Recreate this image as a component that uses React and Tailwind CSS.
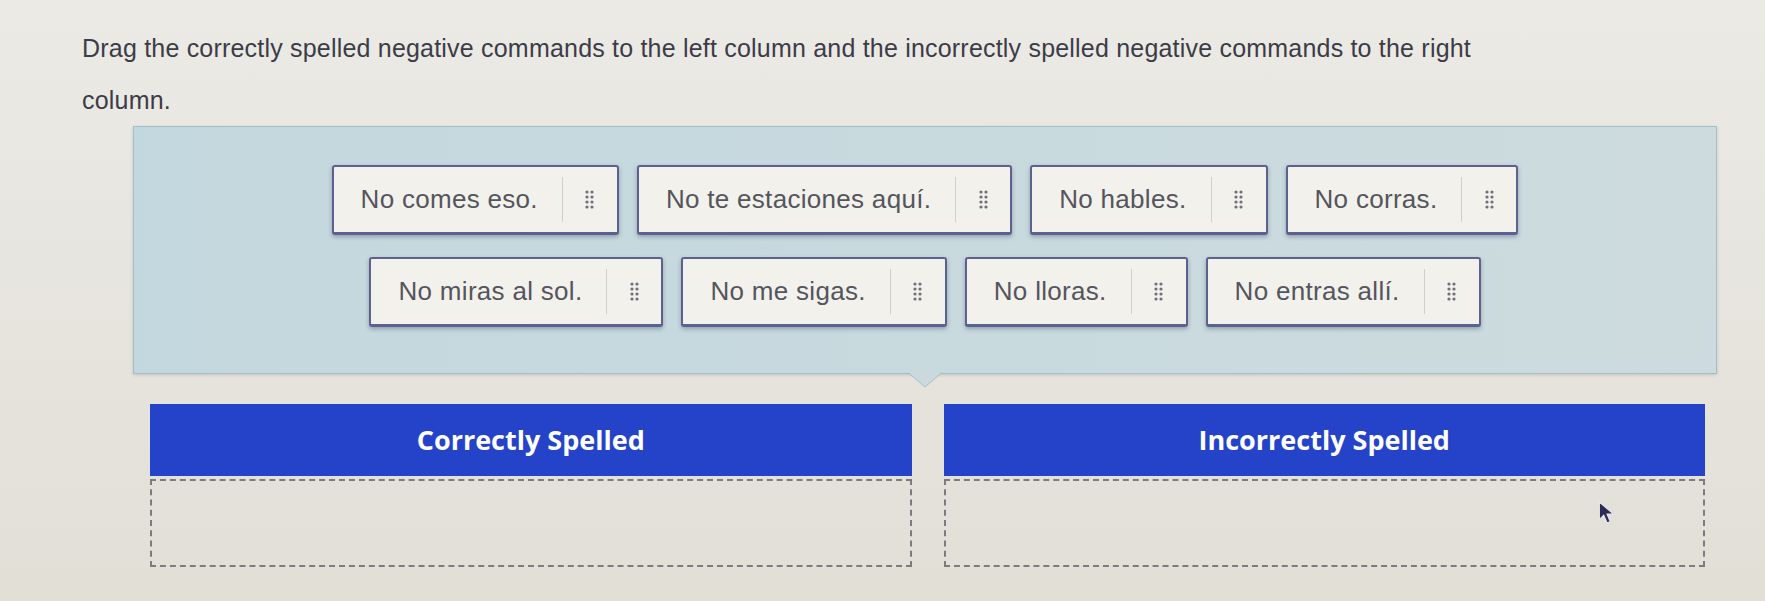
import React from 'react'

const rowOne = ['No comes eso.', 'No te estaciones aquí.', 'No hables.', 'No corras.']
const rowTwo = ['No miras al sol.', 'No me sigas.', 'No lloras.', 'No entras allí.']

// eight-dot grip shown at the right end of every draggable tile
const Grip = () => (
  <svg width="9" height="19" viewBox="0 0 9 19" className="text-[#707078]">
    {[2, 7].map((cx) =>
      [2, 7, 12, 17].map((cy) => <circle key={`${cx}-${cy}`} cx={cx} cy={cy} r="1.6" fill="currentColor" />)
    )}
  </svg>
)

const Tile = ({ label }) => (
  <div className="flex h-[70px] items-stretch rounded-[3px] border-2 border-b-[3px] border-[#5d6190] bg-[#f2f1ec] shadow-[0_2px_4px_rgba(40,50,90,0.35)]">
    <span className="flex items-center pl-[27px] pr-[24px] text-[26px] tracking-[0.3px] text-[#55555d]">{label}</span>
    <span className="my-[10px] w-px bg-[#cfcfcf]" />
    <span className="flex w-[54px] items-center justify-center">
      <Grip />
    </span>
  </div>
)

const Column = ({ title, children }) => (
  <div className="flex flex-col">
    <div className="flex h-[72px] items-center justify-center bg-[#2443c8] font-['Open_Sans',sans-serif] text-[27px] font-bold text-white">
      {title}
    </div>
    <div className="relative mt-[3px] h-[88px] border-2 border-dashed border-[#7c7c80]">{children}</div>
  </div>
)

export default function App() {
  return (
    <div className="min-h-[601px] w-full overflow-hidden bg-linear-to-b from-[#ebeae5] to-[#e2dfd7] font-['Liberation_Sans',Arial,sans-serif]">
      <p className="w-[1500px] pl-[82px] pt-[22px] text-[25px] leading-[52px] tracking-[0.2px] text-[#3c3c48]">
        Drag the correctly spelled negative commands to the left column and the incorrectly spelled negative commands to the right column.
      </p>

      <div className="relative ml-[133px] flex h-[248px] w-[1584px] flex-col items-center gap-[22px] border border-[#a3c0c9] bg-linear-to-r from-[#c3d8de] to-[#cddbde] pt-[38px] shadow-[0_1px_3px_rgba(0,0,0,0.15)]">
        <div className="flex gap-[18px]">
          {rowOne.map((label) => (
            <Tile key={label} label={label} />
          ))}
        </div>
        <div className="flex gap-[18px]">
          {rowTwo.map((label) => (
            <Tile key={label} label={label} />
          ))}
        </div>
        <svg width="34" height="16" viewBox="0 0 34 16" className="absolute -bottom-[15px] left-1/2 -translate-x-1/2">
          <path d="M0 0 L17 15 L34 0 Z" fill="#cad9dd" />
          <path d="M0 0.5 L17 15 L34 0.5" fill="none" stroke="#a3c0c9" strokeWidth="1" />
        </svg>
      </div>

      <div className="ml-[150px] mt-[30px] grid w-[1555px] grid-cols-2 gap-x-[32px]">
        <Column title="Correctly Spelled" />
        <Column title="Incorrectly Spelled">
          <svg width="18" height="24" viewBox="0 0 16 22" className="absolute left-[652px] top-[20px]">
            <path d="M1 1 L1 17 L5 13 L8 20 L11 19 L8 12 L14 12 Z" fill="#2b2b55" stroke="#e8e8ea" strokeWidth="1" />
          </svg>
        </Column>
      </div>
    </div>
  )
}
